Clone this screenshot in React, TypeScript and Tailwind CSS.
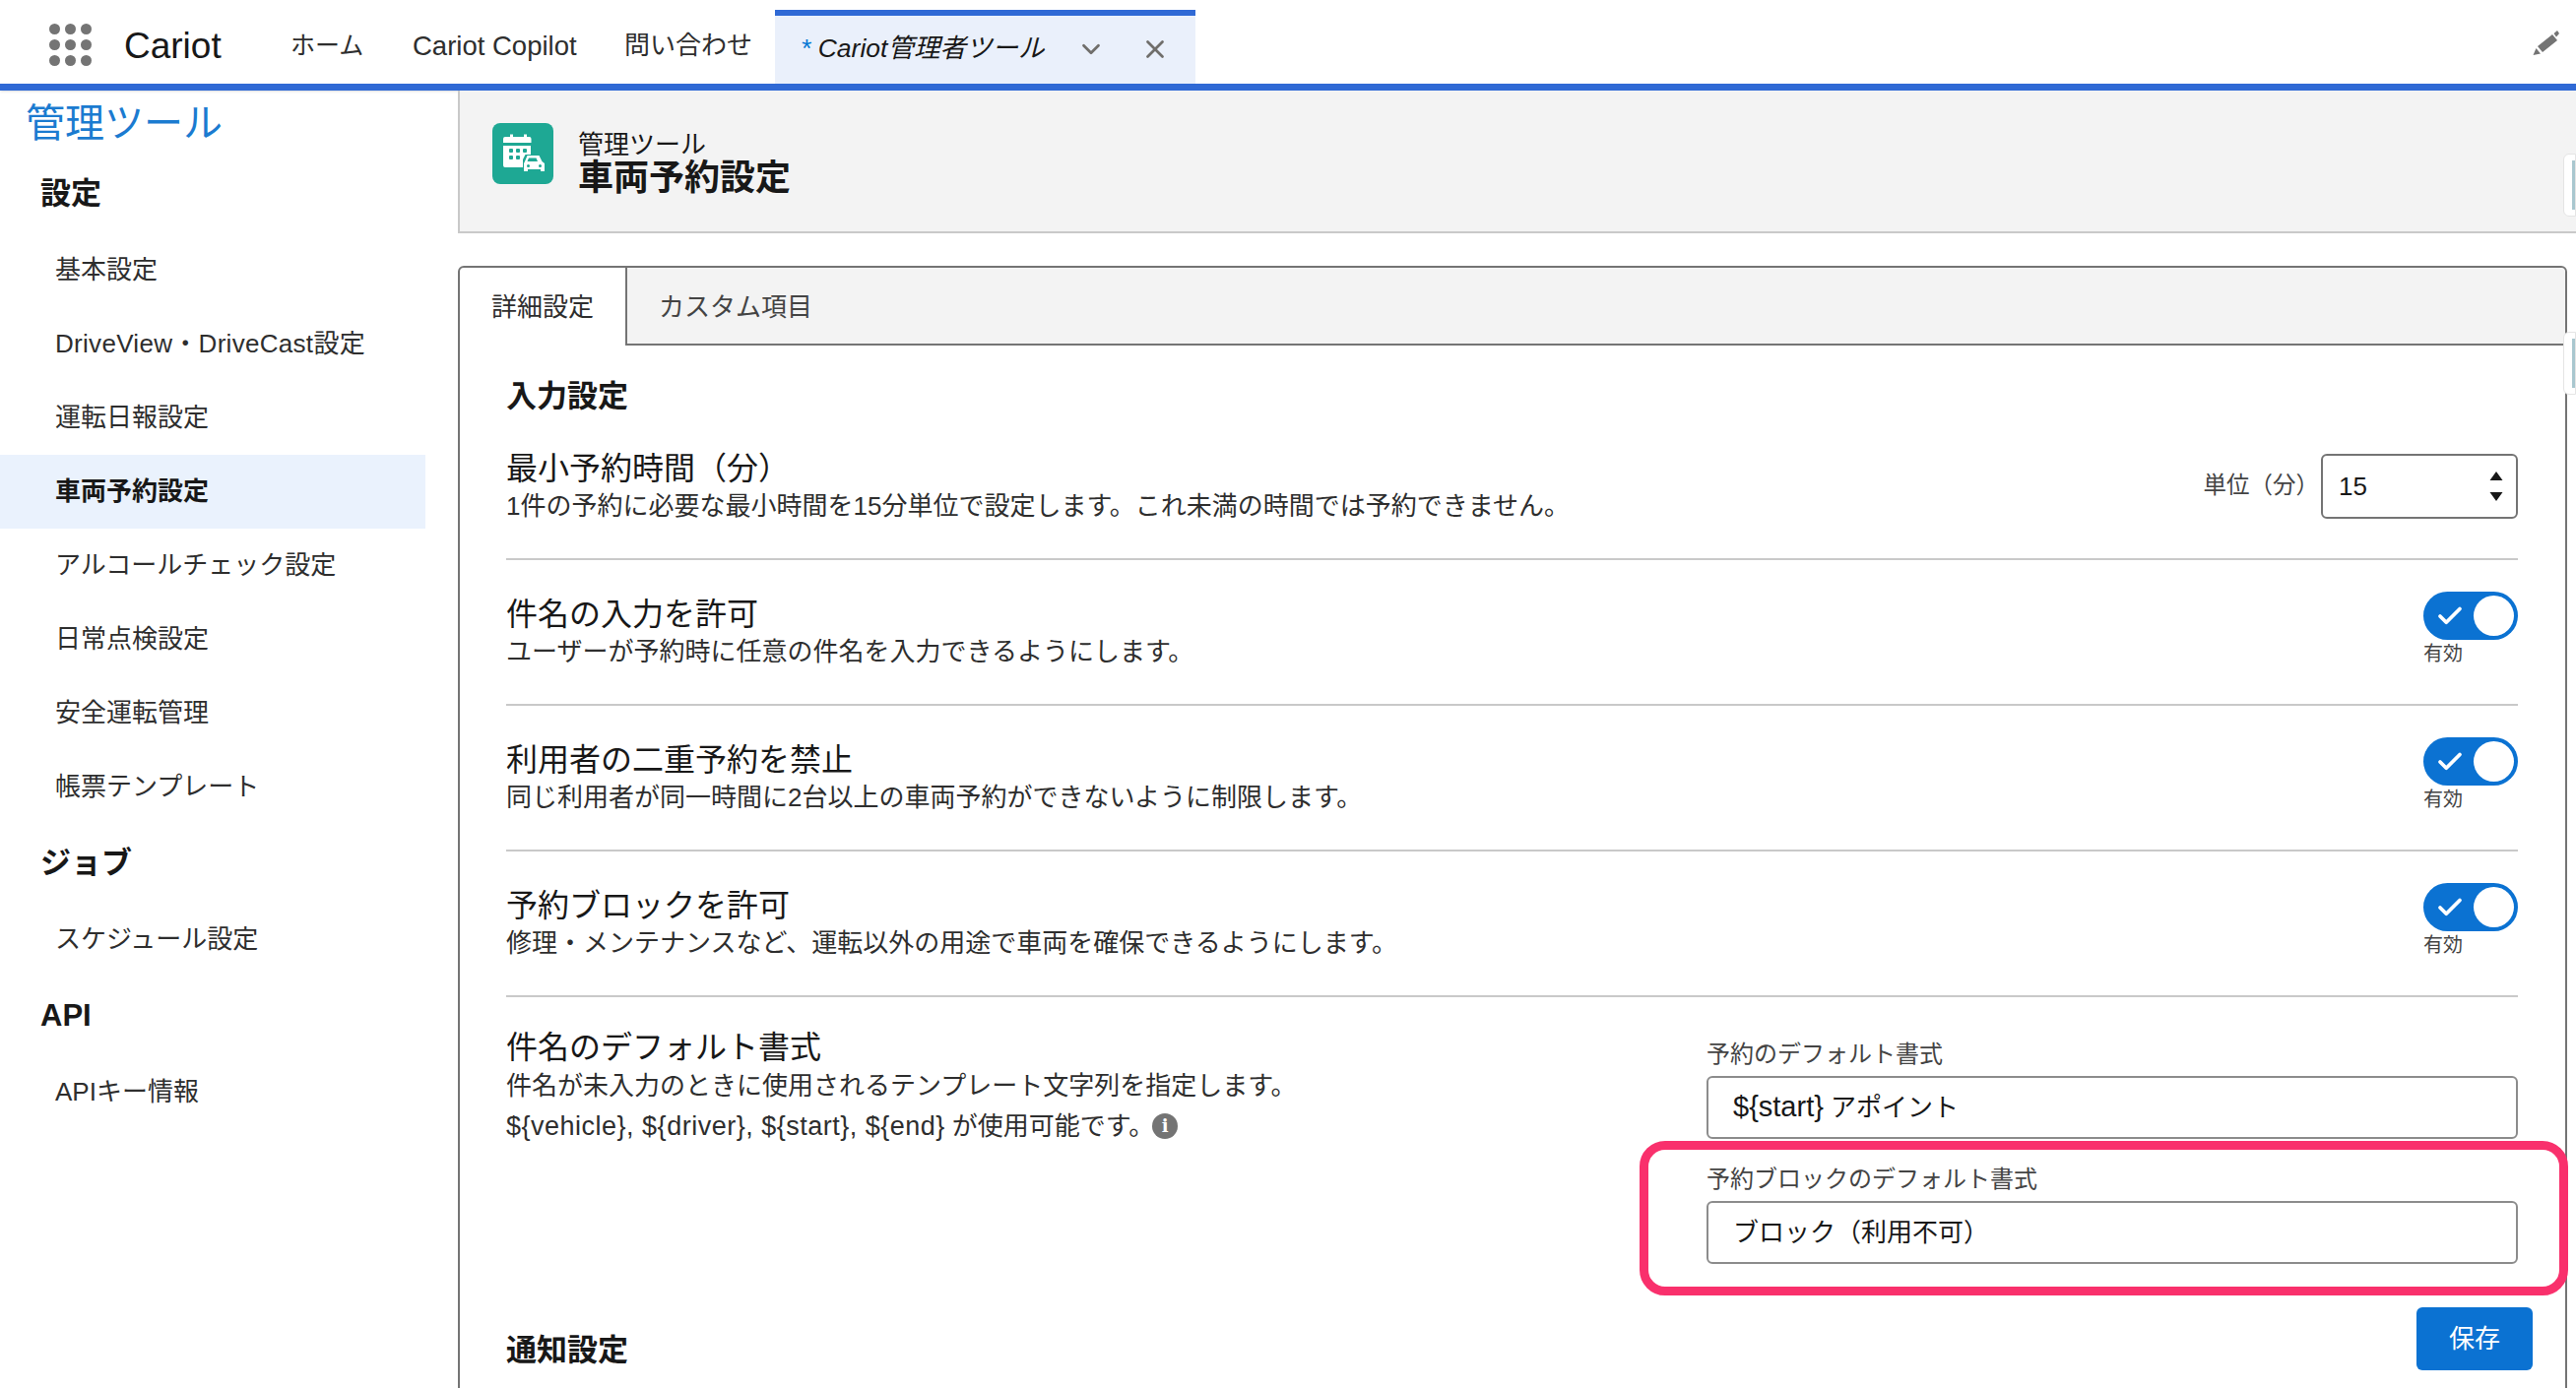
import type { ReactNode } from "react";
import { ChevronDown, X, Check } from "lucide-react";

const settingsItems = [
  "基本設定",
  "DriveView・DriveCast設定",
  "運転日報設定",
  "車両予約設定",
  "アルコールチェック設定",
  "日常点検設定",
  "安全運転管理",
  "帳票テンプレート",
];

const toggleRows = [
  { title: "件名の入力を許可", desc: "ユーザーが予約時に任意の件名を入力できるようにします。" },
  { title: "利用者の二重予約を禁止", desc: "同じ利用者が同一時間に2台以上の車両予約ができないように制限します。" },
  { title: "予約ブロックを許可", desc: "修理・メンテナンスなど、運転以外の用途で車両を確保できるようにします。" },
];

function SideItem({ label, active = false }: { label: ReactNode; active?: boolean }) {
  return (
    <div
      className={
        active
          ? "h-[75px] w-[432px] pl-[56px] flex items-center text-[26px] font-bold text-[#181818] bg-[#eaf2fd]"
          : "h-[75px] w-[432px] pl-[56px] flex items-center text-[26px] text-[#2e2e2e]"
      }
    >
      {label}
    </div>
  );
}

function SideHeading({ label }: { label: string }) {
  return <div className="h-[80px] pl-[41px] flex items-center text-[31px] font-bold text-[#181818]">{label}</div>;
}

function Toggle() {
  return (
    <div className="w-[96px] pt-[32px]">
      <div className="h-[49px] w-[96px] rounded-full bg-[#0b72d2] flex items-center justify-between pl-[12px] pr-[4px]">
        <Check className="w-[30px] h-[30px] text-white" strokeWidth={3} />
        <div className="w-[41px] h-[41px] rounded-full bg-white" />
      </div>
      <div className="mt-[1px] text-[20px] leading-[26px] text-[#444444]">有効</div>
    </div>
  );
}

function FieldBlock({ label, value }: { label: string; value: ReactNode }) {
  return (
    <div>
      <div className="h-[32px] leading-[32px] text-[24px] text-[#444444]">{label}</div>
      <div className="mt-[6px] h-[64px] border-2 border-[#8c8c8c] rounded-[6px] bg-white flex items-center pl-[25px] text-[26px] text-[#181818]">
        {value}
      </div>
    </div>
  );
}

export default function App() {
  return (
    <div className="relative h-[1410px] w-full overflow-hidden bg-white font-['Liberation_Sans','Noto_Sans_CJK_JP',sans-serif]">
      {/* Top nav */}
      <header className="h-[92px] flex items-stretch border-b-[7px] border-[#2f69d5] bg-white shadow-sm">
        <div className="w-[126px] pl-[50px] pt-[5px] flex items-center">
          <div className="grid grid-cols-3 gap-x-[5px] gap-y-[5px]">
            {[0, 1, 2, 3, 4, 5, 6, 7, 8].map((i) => (
              <span key={i} className="w-[11px] h-[11px] rounded-full bg-[#747474]" />
            ))}
          </div>
        </div>
        <div className="w-[169px] pt-[9px] flex items-center text-[37px] text-[#181818]">Cariot</div>
        <div className="w-[124px] pt-[8px] flex items-center text-[25px] text-[#2e2e2e]">ホーム</div>
        <div className="w-[215px] pt-[8px] flex items-center text-[27.500px] text-[#2e2e2e]">Cariot Copilot</div>
        <div className="w-[153px] pt-[8px] flex items-center text-[26px] text-[#2e2e2e]">問い合わせ</div>
        <div className="mt-[10px] w-[427px] border-t-[6px] border-[#2f69d5] bg-[#eaf0fb] flex items-center pl-[26px] pb-[2px]">
          <span className="text-[26.500px] italic text-[#181818] w-[280px]">
            <span className="text-[#0176d3]">* </span>Cariot管理者ツール
          </span>
          <ChevronDown className="w-[30px] h-[30px] text-[#706e6b]" strokeWidth={2.2} />
          <X className="w-[30px] h-[30px] text-[#706e6b] ml-[35px]" strokeWidth={2.2} />
        </div>
        <div className="flex-1 flex items-center justify-end pr-[17px]">
          <svg viewBox="0 0 27 26" className="w-[27px] h-[26px]" fill="#747474">
            <path d="M5 17L20 5l5 6-15 12zM21.500 4L25 1l2 3-3 3.500zM3.500 19L8 24.500 0.500 26z" />
          </svg>
        </div>
      </header>

      <div className="flex h-[1318px]">
        {/* Sidebar */}
        <aside className="w-[465px] shrink-0">
          <div className="h-[65px] pl-[26px] flex items-center text-[40px] leading-none text-[#1b7bd0]">管理ツール</div>
          <SideHeading label="設定" />
          {settingsItems.map((item) => (
            <SideItem
              key={item}
              label={item === "DriveView・DriveCast設定" ? <span className="tracking-[0.3px]">{item}</span> : item}
              active={item === "車両予約設定"}
            />
          ))}
          <SideHeading label="ジョブ" />
          <SideItem label="スケジュール設定" />
          <SideHeading label="API" />
          <SideItem label="APIキー情報" />
        </aside>

        {/* Main */}
        <main className="flex-1 min-w-0">
          <div className="h-[145px] bg-[#f3f3f3] border-l-2 border-b-2 border-[#c9c9c9] flex items-start pl-[33px] pt-[33px]">
            <div className="w-[62px] h-[62px] rounded-[8px] bg-[#1ea894]">
              <svg viewBox="0 0 62 62" className="w-[62px] h-[62px]" fill="white">
                <path d="M13 14h5v-2.500h3V14h11v-2.500h3V14h2.500a2 2 0 012 2v4H11v-4a2 2 0 012-2z" />
                <path d="M11 23h28v9h-5.500l-2.500 5v8H13a2 2 0 01-2-2z" />
                <path d="M35.500 33h12l3 6 2.500 2v8h-4v-2H36v2h-4v-8l1-2zm1.500 2.500l-1.500 3.500h10.500l-1.500-3.500z" />
                <g fill="#1ea894">
                  <rect x="17" y="26" width="4" height="4" rx="1" />
                  <rect x="24" y="26" width="4" height="4" rx="1" />
                  <rect x="31" y="26" width="4" height="4" rx="1" />
                  <rect x="17" y="33" width="4" height="4" rx="1" />
                  <rect x="24" y="33" width="4" height="4" rx="1" />
                  <circle cx="36.500" cy="43.500" r="1.500" />
                  <circle cx="48.500" cy="43.500" r="1.500" />
                </g>
              </svg>
            </div>
            <div className="ml-[25px] pt-[7px]">
              <div className="text-[26px] leading-[30px] text-[#181818]">管理ツール</div>
              <div className="text-[36px] leading-[38px] font-bold text-[#181818]">車両予約設定</div>
            </div>
          </div>

          <div className="mt-[33px] mr-[9px] h-[1200px] border-2 border-[#747474] rounded-t-[6px] bg-white">
            {/* Tabs */}
            <div className="h-[79px] flex">
              <div className="w-[168px] pt-[2px] flex items-center justify-center text-[26px] text-[#2e2e2e]">詳細設定</div>
              <div className="flex-1 pt-[4px] bg-[#f3f3f3] border-l-2 border-b-2 border-[#747474] flex items-center pl-[32px] text-[26px] text-[#444444] rounded-tr-[6px]">
                カスタム項目
              </div>
            </div>

            <div className="pl-[47px] pr-[48px]">
              <div className="h-[70px] pt-[34px] text-[31px] leading-[36px] font-bold text-[#181818]">入力設定</div>

              {/* Minimum time */}
              <div className="h-[148px] border-b-2 border-[#c9c9c9] flex justify-between">
                <div className="pt-[36px]">
                  <div className="text-[32px] leading-[38px] text-[#181818]">最小予約時間（分）</div>
                  <div className="mt-[2px] text-[26px] leading-[34px] text-[#2e2e2e]">
                    1件の予約に必要な最小時間を15分単位で設定します。これ未満の時間では予約できません。
                  </div>
                </div>
                <div className="pt-[40px] flex items-start">
                  <div className="h-[66px] flex items-center text-[23.500px] text-[#444444] mr-[2px]">単位（分）</div>
                  <div className="w-[200px] h-[66px] border-2 border-[#747474] rounded-[6px] flex items-center justify-between pl-[16px] pr-[13px] text-[26px] text-[#181818]">
                    15
                    <svg viewBox="0 0 14 32" className="w-[14px] h-[32px]" fill="#181818">
                      <path d="M7 1l6.500 9H.5zM7 31l-6.500-9h13z" />
                    </svg>
                  </div>
                </div>
              </div>

              {/* Toggle rows */}
              {toggleRows.map((row) => (
                <div key={row.title} className="h-[148px] border-b-2 border-[#c9c9c9] flex justify-between">
                  <div className="pt-[36px]">
                    <div className="text-[32px] leading-[38px] text-[#181818]">{row.title}</div>
                    <div className="mt-[2px] text-[26px] leading-[34px] text-[#2e2e2e]">{row.desc}</div>
                  </div>
                  <Toggle />
                </div>
              ))}

              {/* Default format */}
              <div className="flex justify-between">
                <div className="pt-[32px]">
                  <div className="text-[32px] leading-[38px] text-[#181818]">件名のデフォルト書式</div>
                  <div className="mt-[3px] text-[26px] leading-[34px] text-[#2e2e2e]">
                    件名が未入力のときに使用されるテンプレート文字列を指定します。
                  </div>
                  <div className="mt-[7px] flex items-center text-[26px] leading-[34px] text-[#2e2e2e]">
                    <span className="text-[27px] tracking-[0.5px]">{"${vehicle}, ${driver}, ${start}, ${end}"}</span>
                    <span className="ml-[7px]">が使用可能です。</span>
                    <span className="ml-[-2px] w-[26px] h-[26px] rounded-full bg-[#747474] text-white text-[18px] font-bold flex items-center justify-center font-['DejaVu_Serif',serif]">
                      i
                    </span>
                  </div>
                </div>
                <div className="w-[824px] pt-[42px]">
                  <FieldBlock
                    label="予約のデフォルト書式"
                    value={
                      <>
                        <span className="text-[29px] mr-[7px]">{"${start}"}</span>アポイント
                      </>
                    }
                  />
                  <div className="mt-[25px]">
                    <FieldBlock label="予約ブロックのデフォルト書式" value="ブロック（利用不可）" />
                  </div>
                </div>
              </div>

              <div className="mt-[72px] text-[31px] leading-[32px] font-bold text-[#181818]">通知設定</div>
            </div>
          </div>
        </main>
      </div>

      {/* Annotation box */}
      <div className="absolute left-[1665px] top-[1159px] w-[943px] h-[157px] border-[9px] border-[#f9306c] rounded-[26px]" />

      {/* Floating save */}
      <div className="absolute left-[2454px] top-[1328px] w-[118px] h-[64px] rounded-[6px] bg-[#0b72d2] text-white text-[26px] flex items-center justify-center">
        保存
      </div>

      {/* Edge handles */}
      <div className="absolute left-[2603px] top-[156px] w-[13px] h-[64px] bg-white border border-[#e5e5e5] rounded-l-[6px] pl-[8px] py-[6px]">
        <div className="w-full h-full bg-[#a9c7cf]" />
      </div>
      <div className="absolute left-[2603px] top-[337px] w-[13px] h-[64px] bg-white border border-[#e5e5e5] rounded-l-[6px] pl-[8px] py-[6px]">
        <div className="w-full h-full bg-[#a9c7cf]" />
      </div>
    </div>
  );
}
